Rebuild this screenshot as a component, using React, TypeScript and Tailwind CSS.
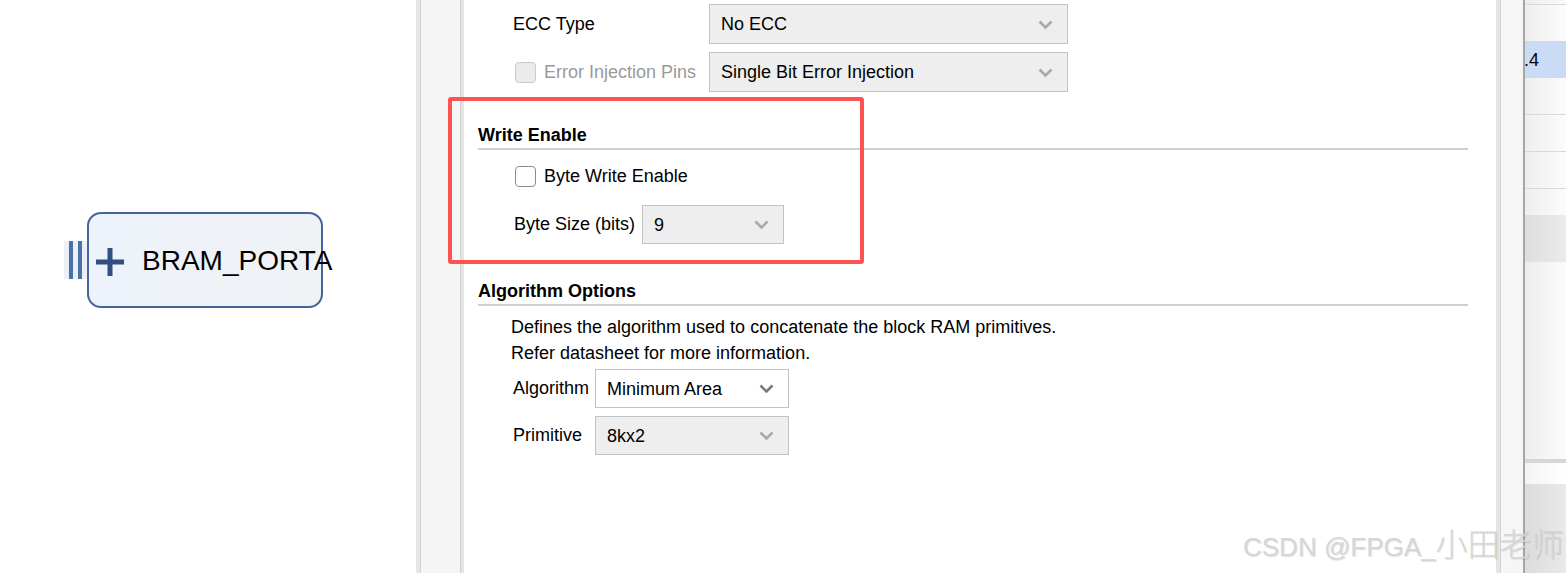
import React from 'react';

const UI_FONT = "font-['Liberation_Sans',Arial,sans-serif]";

// small gray "v" used by every combo box
const Chevron: React.FC<{ dark?: boolean }> = ({ dark }) => (
  <svg width="15" height="9" viewBox="0 0 15 9" className="shrink-0">
    <polyline
      points="1.5,1.5 7.5,7.5 13.5,1.5"
      fill="none"
      stroke={dark ? '#7a7a7a' : '#a9a9a9'}
      strokeWidth="2.6"
    />
  </svg>
);

interface ComboProps {
  value: string;
  width: string;
  enabled?: boolean;
}

const Combo: React.FC<ComboProps> = ({ value, width, enabled }) => (
  <div
    className={`${width} h-full flex items-center justify-between pl-[11px] pr-[14px] border border-[#c3c3c3] ${
      enabled ? 'bg-white' : 'bg-[#eeeeee]'
    }`}
  >
    <span className="text-[18px] text-black leading-none">{value}</span>
    <Chevron dark={enabled} />
  </div>
);

const Checkbox: React.FC<{ disabled?: boolean }> = ({ disabled }) => (
  <div
    className={`w-[21px] h-[21px] rounded-[4px] border-[1.5px] shrink-0 ${
      disabled ? 'border-[#cacaca] bg-[#ebebeb]' : 'border-[#8c8c8c] bg-white'
    }`}
  />
);

const SectionHeader: React.FC<{ title: string; top: string }> = ({ title, top }) => (
  <>
    <div className={`${top} ml-[14px] h-[22px] leading-[22px] text-[18px] font-bold text-black`}>{title}</div>
    <div className="mt-[2px] ml-[14px] mr-[28px] h-[2px] bg-[#cfcfcf]" />
  </>
);

// left block design canvas with the BRAM_PORTA interface pin
const Canvas: React.FC = () => (
  <div className="relative w-[416px] h-full bg-white shrink-0">
    <div className="absolute left-[64px] top-[241px] w-[24px] h-[38px] bg-[#e9eef7] flex gap-[5px] pl-[5px]">
      <div className="w-[4px] h-full bg-[#4a70a6]" />
      <div className="w-[4px] h-full bg-[#4a70a6]" />
    </div>
    <div className="absolute left-[87px] top-[212px] w-[236px] h-[96px] rounded-[14px] border-2 border-[#46639c] bg-gradient-to-r from-[#edf3fb] to-[#f0f2f5]" />
    <svg className="absolute left-[96px] top-[248px]" width="28" height="28" viewBox="0 0 28 28">
      <rect x="11.5" y="0" width="5" height="28" fill="#334f82" />
      <rect x="0" y="11.5" width="28" height="5" fill="#334f82" />
    </svg>
    <span className="absolute left-[142px] top-[247px] text-[28px] leading-none text-black whitespace-nowrap">
      BRAM_PORTA
    </span>
  </div>
);

// right-hand table that peeks in at the edge
const TableEdge: React.FC = () => (
  <div className="flex-1 min-w-0 h-full flex flex-col overflow-hidden">
    <div className="h-[4px] bg-gradient-to-r from-[#ececec] to-[#fbfbfb]" />
    <div className="h-px bg-[#d9d9d9]" />
    <div className="h-[36px] bg-gradient-to-r from-[#eeeeee] to-[#fcfcfc]" />
    <div className="h-[37px] bg-[#c9dbf5] flex items-center">
      <span className="ml-[-1px] text-[18px] leading-none text-black whitespace-nowrap">.4</span>
    </div>
    <div className="h-[36px] bg-gradient-to-r from-[#eeeeee] to-[#fcfcfc]" />
    <div className="h-px bg-[#d9d9d9]" />
    <div className="h-[36px] bg-gradient-to-r from-[#eeeeee] to-[#fcfcfc]" />
    <div className="h-px bg-[#d9d9d9]" />
    <div className="h-[36px] bg-gradient-to-r from-[#eeeeee] to-[#fcfcfc]" />
    <div className="h-px bg-[#d9d9d9]" />
    <div className="h-[26px] bg-gradient-to-r from-[#eeeeee] to-[#fcfcfc]" />
    <div className="h-[47px] bg-gradient-to-r from-[#dedede] to-[#ebebeb]" />
    <div className="h-[197px] bg-gradient-to-r from-[#ededed] to-[#fcfcfc]" />
    <div className="h-[4px] bg-[#d6d6d6]" />
    <div className="h-[21px] bg-gradient-to-r from-[#f4f4f4] to-white" />
    <div className="flex-1 bg-gradient-to-r from-[#dcdcdc] to-[#e9e9e9]" />
  </div>
);

const FormPanel: React.FC = () => (
  <div className="w-[1032px] shrink-0 h-full bg-white flex flex-col text-black">
    {/* ECC Type */}
    <div className="mt-[4px] h-[40px] flex items-center">
      <span className="w-[245px] pl-[49px] text-[18px]">ECC Type</span>
      <Combo value="No ECC" width="w-[359px]" />
    </div>

    {/* Error Injection Pins */}
    <div className="mt-[8px] h-[40px] flex items-center">
      <div className="w-[245px] pl-[51px] flex items-center gap-[8px]">
        <Checkbox disabled />
        <span className="text-[18px] text-[#9a9a9a]">Error Injection Pins</span>
      </div>
      <Combo value="Single Bit Error Injection" width="w-[359px]" />
    </div>

    <SectionHeader title="Write Enable" top="mt-[32px]" />

    <div className="mt-[16px] h-[21px] pl-[51px] flex items-center gap-[8px]">
      <Checkbox />
      <span className="text-[18px]">Byte Write Enable</span>
    </div>

    <div className="mt-[18px] h-[39px] flex items-center">
      <span className="w-[178px] pl-[50px] text-[18px]">Byte Size (bits)</span>
      <Combo value="9" width="w-[142px]" />
    </div>

    <SectionHeader title="Algorithm Options" top="mt-[36px]" />

    <div className="mt-[8px] pl-[47px] text-[18px] leading-[26px]">
      <div>Defines the algorithm used to concatenate the block RAM primitives.</div>
      <div>Refer datasheet for more information.</div>
    </div>

    <div className="mt-[3px] h-[39px] flex items-center">
      <span className="w-[131px] pl-[49px] text-[18px]">Algorithm</span>
      <Combo value="Minimum Area" width="w-[194px]" enabled />
    </div>

    <div className="mt-[8px] h-[39px] flex items-center">
      <span className="w-[131px] pl-[49px] text-[18px]">Primitive</span>
      <Combo value="8kx2" width="w-[194px]" />
    </div>
  </div>
);

export default function App() {
  return (
    <div className={`relative w-[1566px] h-[573px] overflow-hidden flex bg-white ${UI_FONT}`}>
      <Canvas />

      {/* left splitter */}
      <div className="w-[4px] shrink-0 h-full bg-[#e5e5e5]" />
      <div className="w-px shrink-0 h-full bg-[#d2d2d2]" />
      <div className="w-[39px] shrink-0 h-full bg-[#f5f5f5]" />
      <div className="w-px shrink-0 h-full bg-[#d2d2d2]" />
      <div className="w-[3px] shrink-0 h-full bg-[#e5e5e5]" />

      <FormPanel />

      {/* right splitter */}
      <div className="w-[4px] shrink-0 h-full bg-[#e5e5e5]" />
      <div className="w-px shrink-0 h-full bg-[#d2d2d2]" />
      <div className="w-[22px] shrink-0 h-full bg-[#f6f6f6]" />
      <div className="w-[2px] shrink-0 h-full bg-[#a6a6a6]" />

      <TableEdge />

      {/* red annotation box */}
      <div className="absolute left-[448px] top-[97px] w-[416px] h-[167px] border-4 border-[#ff5252] rounded-[3px]" />

      {/* watermark */}
      <div className="absolute left-[1243px] top-[526px] whitespace-nowrap text-[#d6d6d6] [text-shadow:1px_1px_1px_rgba(0,0,0,0.12)] flex items-baseline">
        <span className="text-[26px] font-['Liberation_Sans',sans-serif]">CSDN @FPGA_</span>
        <span className="text-[32px] font-['Noto_Sans_CJK_SC',sans-serif] font-light leading-none">小田老师</span>
      </div>
    </div>
  );
}
